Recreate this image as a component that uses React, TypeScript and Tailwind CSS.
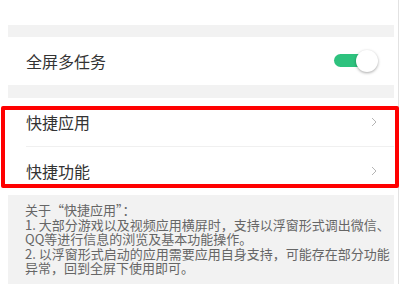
import React from 'react'

const font = { fontFamily: '"Noto Sans CJK SC", "Noto Sans", sans-serif' }

function Chevron() {
  return (
    <svg width="6" height="10" viewBox="0 0 6 10" className="shrink-0">
      <polyline points="1,1 5,5 1,9" fill="none" stroke="#b5b5b5" strokeWidth="1" />
    </svg>
  )
}

function Toggle() {
  return (
    <div className="relative w-[44px] h-[22px] shrink-0">
      <div className="absolute left-0 top-[4px] w-[36px] h-[13px] rounded-full bg-[#2ec27e]" />
      <div className="absolute left-[22px] top-0 w-[22px] h-[22px] rounded-full bg-white shadow-[0_1px_3px_rgba(0,0,0,0.35)]" />
    </div>
  )
}

function LinkRow({ label }: { label: string }) {
  return (
    <div className="h-[48px] flex items-center justify-between pl-[18px] pr-[17px]">
      <span className="text-[16px] text-[#333]">{label}</span>
      <Chevron />
    </div>
  )
}

export default function App() {
  return (
    <div className="relative w-[400px] h-[284px] bg-white overflow-hidden" style={font}>
      <div className="absolute right-[1px] top-0 bottom-0 w-px bg-[#e2e2e2]" />

      <div className="ml-[8px] w-[386px] flex flex-col">
        <div className="h-[25px]" />
        <div className="h-[12px] bg-[#f2f2f2]" />

        {/* 全屏多任务 */}
        <div className="h-[48px] flex items-center justify-between pl-[18px] pr-[16px]">
          <span className="text-[16px] text-[#333]">全屏多任务</span>
          <Toggle />
        </div>

        <div className="h-[13px] bg-[#f2f2f2]" />

        <LinkRow label="快捷应用" />
        <div className="ml-[18px] h-px bg-[#f0f0f0]" />
        <LinkRow label="快捷功能" />

        {/* Note */}
        <div className="h-[100px] bg-[#f2f2f2] pl-[17px] pt-[8px] text-[13px] leading-[14.5px] text-[#666] whitespace-nowrap">
          <div>关于“快捷应用”：</div>
          <div>1. 大部分游戏以及视频应用横屏时，支持以浮窗形式调出微信、</div>
          <div>QQ等进行信息的浏览及基本功能操作。</div>
          <div>2. 以浮窗形式启动的应用需要应用自身支持，可能存在部分功能</div>
          <div>异常，回到全屏下使用即可。</div>
        </div>
      </div>

      {/* red highlight annotation */}
      <div className="absolute left-[1px] top-[106px] w-[398px] h-[82px] border-[4px] border-[#ff0000] rounded-[2px] pointer-events-none" />
    </div>
  )
}
